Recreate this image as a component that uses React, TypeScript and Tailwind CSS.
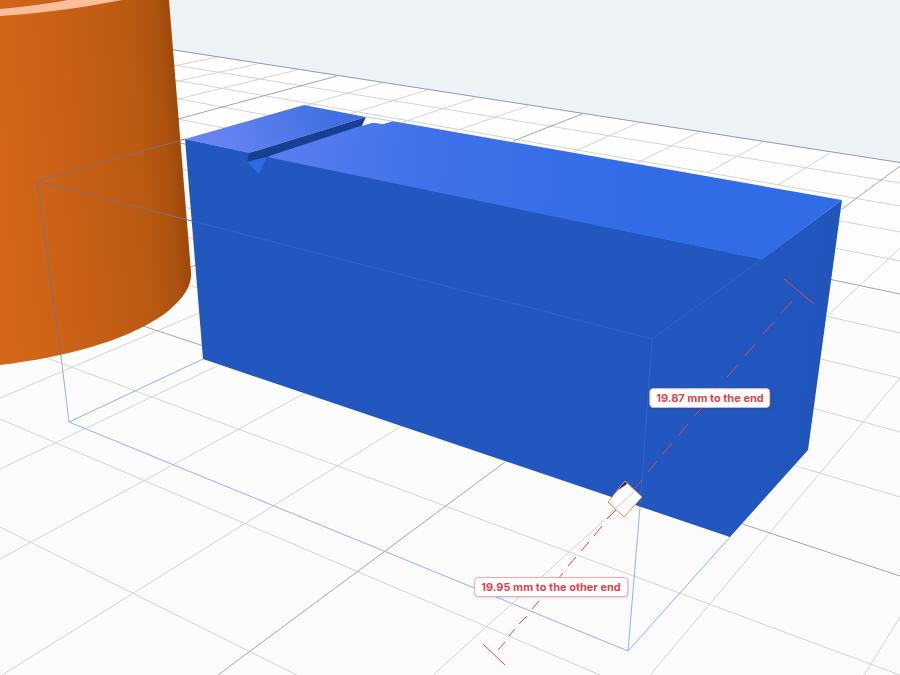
/**
 * Viewport Component
 *
 * Perspective view of a work plane with a cylinder, a notched box
 * and the distance labels of the point that is being dragged.
 */

const SCENE_WIDTH = 900;
const SCENE_HEIGHT = 675;

type Segment = [number, number, number, number];

// Light lines of the work plane, far to near
const MINOR_LINES: Segment[] = [
  [174, 65, 900, 183],
  [174, 80, 900, 206],
  [174, 98, 900, 232],
  [178, 119, 900, 261],
  [182, 169, 900, 333],
  [184, 207, 900, 378],
  [186, 237, 900, 432],
  [188, 285, 900, 497],
  [47, 358, 900, 675],
  [0, 419, 600, 675],
  [0, 527, 297, 675],
  [217, 57, 174, 66],
  [257, 64, 174, 82],
  [297, 70, 174, 100],
  [382, 83, 304, 106],
  [427, 90, 350, 114],
  [475, 98, 403, 122],
  [528, 106, 455, 131],
  [638, 123, 573, 152],
  [699, 132, 637, 163],
  [763, 142, 707, 173],
  [830, 153, 778, 185],
  [900, 248, 828, 315],
  [900, 378, 650, 675],
  [900, 617, 864, 675],
  [640, 488, 433, 675],
  [403, 425, 2, 675],
  [305, 393, 0, 559],
  [217, 366, 0, 469],
  [199, 313, 0, 398],
];

const MAJOR_LINES: Segment[] = [
  [180, 143, 900, 294],
  [143, 326, 900, 576],
  [337, 76, 178, 119],
  [582, 114, 513, 141],
  [900, 166, 842, 209],
  [505, 462, 218, 675],
  [188, 268, 196, 265],
];

// Bounding cage, the parts in front of the background
const CAGE_LINES: Segment[] = [
  [69, 422, 203, 359],
  [69, 422, 628, 651],
  [628, 651, 640, 507],
  [628, 651, 730, 537],
  [61, 356, 69, 422],
];

// The same cage where it passes over the cylinder
const CAGE_LINES_MUTED: Segment[] = [
  [37, 181, 185, 139],
  [37, 181, 192, 221],
  [37, 181, 61, 356],
];

// ... and over the box
const CAGE_LINES_ON_BOX: Segment[] = [
  [192, 221, 652, 339],
  [652, 339, 762, 259],
  [652, 339, 640, 507],
];

const DASHES: Segment[] = [
  [792, 301, 781, 313],
  [774, 322, 763, 334],
  [755, 344, 745, 356],
  [738, 365, 727, 377],
  [719, 387, 710, 397],
  [702, 408, 694, 416],
  [688, 424, 678, 436],
  [672, 443, 663, 454],
  [657, 461, 648, 472],
  [642, 480, 635, 488],
  [616, 510, 607, 519],
  [602, 526, 594, 536],
  [589, 542, 581, 551],
  [576, 557, 568, 566],
  [563, 573, 557, 580],
  [539, 601, 532, 609],
  [527, 616, 519, 624],
  [515, 629, 509, 636],
  [505, 642, 498, 650],
];

const END_TICKS: Segment[] = [
  [784, 279, 814, 304],
  [483, 644, 505, 665],
];

const DISTANCES = [
  { text: "19.87 mm to the end", x: 710, y: 398 },
  { text: "19.95 mm to the other end", x: 551, y: 587 },
];

interface LinesProps {
  segments: Segment[];
  className: string;
}

function Lines({ segments, className }: LinesProps) {
  return (
    <g className={className}>
      {segments.map(([x1, y1, x2, y2]) => (
        <line key={`${x1}-${y1}-${x2}-${y2}`} x1={x1} y1={y1} x2={x2} y2={y2} />
      ))}
    </g>
  );
}

function Cylinder() {
  return (
    <g>
      <path
        d="M0 0H169L191 272C192 285 184 299 163 315C125 341 66 357 0 365Z"
        fill="url(#cylinder-side)"
      />
      <path d="M0 9Q35 6 68 0H122Q62 12 0 16Z" fill="#ffbd9b" />
    </g>
  );
}

function Box() {
  return (
    <g>
      {/* Right side reaches under the front so that no seam shows */}
      <path d="M755 259L762 259L842 200L808 450L730 537L722 533Z" fill="url(#box-right)" />
      <path d="M185 139L762 259L730 537L203 359Z" fill="#2257c0" />
      {/* Top, split by the notch */}
      <path d="M185 139L304 105L366 117L249 153Z" fill="url(#box-top-left)" />
      <path
        d="M267 157L362 125L373 122.5L383 124L392 121L842 200L762 259.5Z"
        fill="url(#box-top-right)"
      />
      {/* Notch */}
      <path d="M366 117L392 121.5L383 124L373 122.5L362 126Z" fill="#fdfdfe" />
      <path d="M249 153L366 117L362 125.5L267 157L247 162Z" fill="#154093" />
      <path d="M247 162L267 157L259 174Z" fill="#2f69e4" />
      <path d="M366 117L392 121" stroke="#b9cdf8" />
    </g>
  );
}

function DragPoint() {
  return (
    <g>
      <path d="M625 481L642 497L624 517L608 502Z" fill="#fdfdfd" />
      <path d="M625 481L617 491L627 484Z" fill="#1c2f63" />
      <path d="M610 513L634 492" stroke="#c9cecf" />
      <path d="M625 481L642 497L624 517L608 502Z" stroke="#ea8c40" />
    </g>
  );
}

function Scene() {
  return (
    <svg
      className="block w-full"
      viewBox={`0 0 ${SCENE_WIDTH} ${SCENE_HEIGHT}`}
      fill="none"
      role="img"
      aria-label="Box and cylinder on the work plane"
    >
      <defs>
        <linearGradient id="floor" x1="0" y1="0" x2="0" y2="1">
          <stop offset="0" stopColor="#ffffff" />
          <stop offset="0.5" stopColor="#fcfcfc" />
          <stop offset="1" stopColor="#fbfbfb" />
        </linearGradient>
        <linearGradient id="cylinder-side" gradientUnits="userSpaceOnUse" x1="0" y1="200" x2="188" y2="186">
          <stop offset="0" stopColor="#d46718" />
          <stop offset="0.4" stopColor="#c86015" />
          <stop offset="0.75" stopColor="#bb5a12" />
          <stop offset="0.9" stopColor="#ac520f" />
          <stop offset="1" stopColor="#994709" />
        </linearGradient>
        <linearGradient id="box-top-left" gradientUnits="userSpaceOnUse" x1="220" y1="150" x2="335" y2="105">
          <stop offset="0" stopColor="#6783f2" />
          <stop offset="1" stopColor="#3f6fe2" />
        </linearGradient>
        <linearGradient id="box-top-right" gradientUnits="userSpaceOnUse" x1="280" y1="150" x2="640" y2="180">
          <stop offset="0" stopColor="#5a7df0" />
          <stop offset="0.4" stopColor="#4072e9" />
          <stop offset="1" stopColor="#316ce7" />
        </linearGradient>
        <linearGradient id="box-right" gradientUnits="userSpaceOnUse" x1="735" y1="400" x2="825" y2="410">
          <stop offset="0" stopColor="#2257c0" />
          <stop offset="1" stopColor="#2155bc" />
        </linearGradient>
      </defs>

      <rect width="900" height="675" fill="#edf2f5" />

      {/* Work plane */}
      <path d="M0 24L174 50L900 162.5V675H0Z" fill="url(#floor)" />
      <Lines segments={MINOR_LINES} className="stroke-[#d0d4d5]" />
      <Lines segments={MAJOR_LINES} className="stroke-[#a2a6a9]" />
      <path d="M0 24L174 50L900 162.5" stroke="#8f97b9" />

      <Cylinder />
      <Box />

      {/* Bounding cage */}
      <Lines segments={CAGE_LINES} className="stroke-[#8fb0f5]" />
      <Lines segments={CAGE_LINES_MUTED} className="stroke-[#80707c]" />
      <Lines segments={CAGE_LINES_ON_BOX} className="stroke-[#2d65d0]" />

      {/* Distance line */}
      <Lines segments={DASHES} className="stroke-[#d9485a]" />
      <Lines segments={END_TICKS} className="stroke-[#d9485a]" />
      <DragPoint />
    </svg>
  );
}

interface DistanceLabelProps {
  text: string;
  x: number;
  y: number;
}

function DistanceLabel({ text, x, y }: DistanceLabelProps) {
  return (
    <div
      className="absolute -translate-x-1/2 -translate-y-1/2 rounded-sm border border-[#eba9b0] bg-white px-1.5 font-['Inter',sans-serif] text-[11px] leading-[18px] font-bold whitespace-nowrap text-[#dc444c] shadow"
      style={{
        left: `${(x / SCENE_WIDTH) * 100}%`,
        top: `${(y / SCENE_HEIGHT) * 100}%`,
      }}
    >
      {text}
    </div>
  );
}

export default function App() {
  return (
    <main className="relative w-full overflow-hidden bg-[#edf2f5]">
      <Scene />
      {DISTANCES.map((distance) => (
        <DistanceLabel key={distance.text} {...distance} />
      ))}
    </main>
  );
}
